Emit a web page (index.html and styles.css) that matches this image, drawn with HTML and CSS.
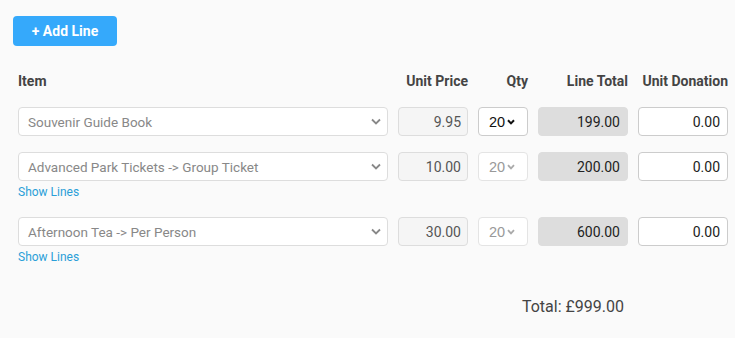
FILE: index.html
```html
<!DOCTYPE html>
<html>
<head>
<meta charset="utf-8">
<link rel="stylesheet" href="styles.css">
</head>
<body>
<div class="page">
  <button class="add-btn">+ Add Line</button>

  <div class="grid head">
    <div class="th">Item</div>
    <div class="th r">Unit Price</div>
    <div class="th r">Qty</div>
    <div class="th r">Line Total</div>
    <div class="th r">Unit Donation</div>
  </div>

  <div class="line">
    <div class="grid">
      <div class="sel item"><span>Souvenir Guide Book</span><svg class="chev" width="10" height="7" viewBox="0 0 10 7"><path d="M1 1.5 L5 5.5 L9 1.5" fill="none" stroke="#888" stroke-width="1.8"/></svg></div>
      <div class="ro price">9.95</div>
      <div class="sel qty on"><span>20</span><svg class="chev" width="8" height="6" viewBox="0 0 8 6"><path d="M1 1.2 L4 4.4 L7 1.2" fill="none" stroke="#111" stroke-width="2"/></svg></div>
      <div class="ro total">199.00</div>
      <div class="inp">0.00</div>
    </div>
  </div>

  <div class="line">
    <div class="grid">
      <div class="sel item"><span>Advanced Park Tickets -&gt; Group Ticket</span><svg class="chev" width="10" height="7" viewBox="0 0 10 7"><path d="M1 1.5 L5 5.5 L9 1.5" fill="none" stroke="#888" stroke-width="1.8"/></svg></div>
      <div class="ro price">10.00</div>
      <div class="sel qty off"><span>20</span><svg class="chev" width="8" height="6" viewBox="0 0 8 6"><path d="M1 1.2 L4 4.4 L7 1.2" fill="none" stroke="#aaa" stroke-width="1.8"/></svg></div>
      <div class="ro total">200.00</div>
      <div class="inp">0.00</div>
    </div>
    <a class="show">Show Lines</a>
  </div>

  <div class="line">
    <div class="grid">
      <div class="sel item"><span>Afternoon Tea -&gt; Per Person</span><svg class="chev" width="10" height="7" viewBox="0 0 10 7"><path d="M1 1.5 L5 5.5 L9 1.5" fill="none" stroke="#888" stroke-width="1.8"/></svg></div>
      <div class="ro price">30.00</div>
      <div class="sel qty off"><span>20</span><svg class="chev" width="8" height="6" viewBox="0 0 8 6"><path d="M1 1.2 L4 4.4 L7 1.2" fill="none" stroke="#aaa" stroke-width="1.8"/></svg></div>
      <div class="ro total">600.00</div>
      <div class="inp">0.00</div>
    </div>
    <a class="show">Show Lines</a>
  </div>

  <div class="sum">Total: £999.00</div>
</div>
</body>
</html>
```
FILE: styles.css
```css
* { box-sizing: border-box; }
html, body { margin: 0; background: #fafafa; }
body { font-family: Roboto, "Noto Sans", sans-serif; color: #444; }
.page { padding: 16px 0 0 13px; width: 735px; }
.add-btn {
  display: block;
  width: 104px; height: 30px;
  background: #35a9fb; color: #fff;
  border: none; border-radius: 4px;
  font-family: Roboto, sans-serif; font-weight: 700; font-size: 14px;
  padding: 0; cursor: pointer;
}
.grid {
  display: grid;
  grid-template-columns: 370px 70px 50px 90px 90px;
  column-gap: 10px;
  margin-left: 5px;
}
.head { margin-top: 25px; }
.th { font-size: 14px; font-weight: 700; line-height: 20px; color: #444; }
.th.r { text-align: right; }
.line { margin-top: 16px; }
.sel, .ro, .inp {
  height: 29px;
  border: 1px solid #ddd;
  border-radius: 4px;
  font-size: 14px;
  display: flex; align-items: center;
}
.sel { background: #fff; }
.sel .chev { margin-left: auto; flex: none; }
.item { padding: 0 6px 0 9px; color: #888; font-size: 13.5px; }
.qty { padding: 0 12px 0 10px; font-family: "Liberation Sans", Arial, sans-serif; font-size: 14.5px; }
.qty.on { border-color: #ccc; color: #111; }
.qty.off { border-color: #e4e4e4; color: #999; }
.ro { justify-content: flex-end; }
.price { background: #f5f5f5; border-color: #ddd; color: #555; padding-right: 6px; }
.total { background: #ddd; border-color: #ddd; color: #222; padding-right: 7px; }
.inp { background: #fff; border-color: #ccc; justify-content: flex-end; color: #222; padding-right: 7px; }
.show {
  display: block; margin: 2px 0 2px 5px;
  font-size: 12px; line-height: 18px; color: #2a9fd8;
}
.sum {
  margin-top: 30px;
  width: 611px;
  text-align: right;
  font-size: 16px; line-height: 22px; color: #444;
}
```
